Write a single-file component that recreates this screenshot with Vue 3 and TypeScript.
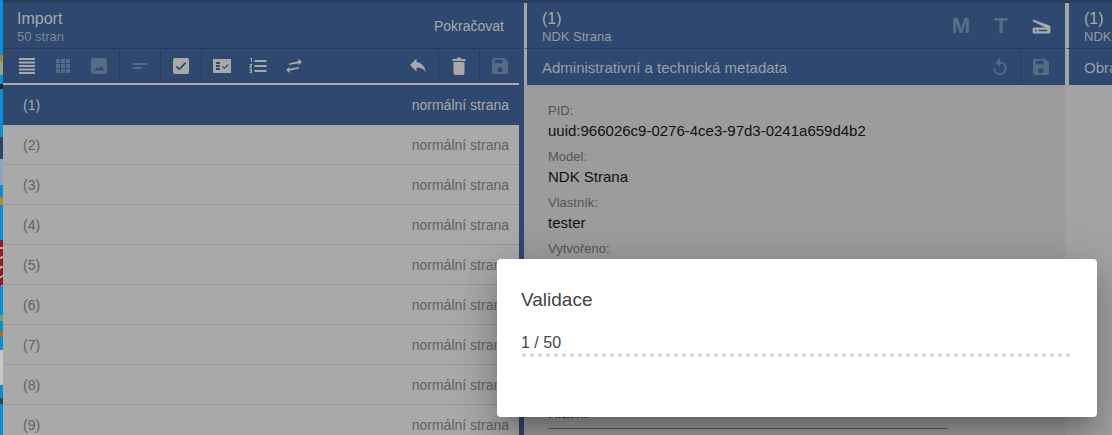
<script setup lang="ts">
const rows = [1, 2, 3, 4, 5, 6, 7, 8, 9];
const fields = [
  { label: 'PID:', value: 'uuid:966026c9-0276-4ce3-97d3-0241a659d4b2' },
  { label: 'Model:', value: 'NDK Strana' },
  { label: 'Vlastník:', value: 'tester' },
  { label: 'Vytvořeno:', value: '' },
];
const dots = Array.from({ length: 69 }, (_, i) => i);
// scraps of the wallpaper that shows down the left edge, under the backdrop
const scraps = [
  { top: 55, height: 7, background: '#a8852f' },
  { top: 62, height: 13, background: '#8fa58d' },
  { top: 84, height: 5, background: '#222' },
  { top: 137, height: 22, background: '#2c4466' },
  { top: 159, height: 26, background: '#8ea6c6' },
  { top: 197, height: 8, background: '#b8862c' },
  { top: 240, height: 46, background: 'repeating-linear-gradient(160deg, #8e1c24 0 7px, #b9a9a9 7px 9px)' },
  { top: 315, height: 6, background: '#7d9a70' },
  { top: 331, height: 5, background: '#b5661d' },
  { top: 350, height: 35, background: '#c4cacb' },
  { top: 398, height: 6, background: '#3d3f44' },
];
</script>

<template>
  <div class="page">
    <div class="strip">
      <i v-for="s in scraps" :key="s.top" class="scrap" :style="{ top: s.top + 'px', height: s.height + 'px', background: s.background }"></i>
    </div>
    <div class="main">
      <div class="topbar"></div>
      <div class="columns">
        <section class="panel list-panel">
          <header class="head">
            <div class="titles">
              <div class="title">Import</div>
              <div class="sub">50 stran</div>
            </div>
            <div class="continue">Pokračovat</div>
          </header>
          <div class="tools">
            <svg class="ic" viewBox="0 0 24 24"><path d="M4 4h16v2H4zM4 7.500h16v2H4zM4 11h16v2H4zM4 14.500h16v2H4zM4 18h16v2H4z"/></svg>
            <svg class="ic dim" viewBox="0 0 24 24"><path d="M5 5h4v4H5zM10 5h4v4h-4zM15 5h4v4h-4zM5 10h4v4H5zM10 10h4v4h-4zM15 10h4v4h-4zM5 15h4v4H5zM10 15h4v4h-4zM15 15h4v4h-4z"/></svg>
            <svg class="ic dim" viewBox="-1.500 -1.500 27 27"><path fill-rule="evenodd" d="M5 3h14a2 2 0 0 1 2 2v14a2 2 0 0 1-2 2H5a2 2 0 0 1-2-2V5a2 2 0 0 1 2-2zM6 17h12l-3.500-5-2.500 3-1.500-1.500z"/></svg>
            <i class="sep"></i>
            <svg class="ic dim" viewBox="0 0 24 24"><path d="M5 9h14v2H5zM5 13h9v2H5z"/></svg>
            <i class="sep"></i>
            <svg class="ic" viewBox="-1.500 -1.500 27 27"><path fill-rule="evenodd" d="M5 3h14a2 2 0 0 1 2 2v14a2 2 0 0 1-2 2H5a2 2 0 0 1-2-2V5a2 2 0 0 1 2-2zm5 14l8-8-1.400-1.400-6.600 6.600-2.600-2.600L6 13z"/></svg>
            <i class="sep"></i>
            <svg class="ic" viewBox="0 0 24 24"><path fill-rule="evenodd" d="M3 5h18v14H3zM6 8v2h4V8zM6 11v2h4v-2zM6 14v2h4v-2zM12 13l1-1 1.500 1.500L17.500 10l1 1-4 4z"/></svg>
            <svg class="ic" viewBox="0 0 24 24"><path d="M8.500 6h12v2h-12zM8.500 11h12v2h-12zM8.500 16h12v2h-12zM4 4h2v4H5V5H4zM3.500 10H6v2l-1.300 1H6v1H3.500v-1.500L5 11H3.500zM3.500 15H6v4H3.500v-1H5v-.500H4v-1h1V16H3.500z"/></svg>
            <svg class="ic" viewBox="0 0 24 24"><path d="M20 8L16.500 5v2.300L7 9.500v1.500l9.500-1.700V11zM4 16l3.500 3v-2.300l9.500-2.200V13l-9.500 1.700V13z"/></svg>
            <span class="spring"></span>
            <svg class="ic" viewBox="0 0 24 24"><path d="M10.500 8V4.500L4 11l6.500 6.500V13.500c4.500 0 7.500 1.500 9.500 5-.8-5-3.500-9.500-9.500-10.500z"/></svg>
            <i class="sep"></i>
            <svg class="ic" viewBox="0 0 24 24"><path d="M6.500 8h11v11a2 2 0 0 1-2 2h-7a2 2 0 0 1-2-2zM5.500 5H10V3.500h4V5h4.500v2h-13z"/></svg>
            <i class="sep"></i>
            <svg class="ic dim" viewBox="-1.500 -1.500 27 27"><path fill-rule="evenodd" d="M5 3h12l4 4v12a2 2 0 0 1-2 2H5a2 2 0 0 1-2-2V5a2 2 0 0 1 2-2zm1 2v4h9V5zm6 8a3 3 0 1 0 0 6 3 3 0 0 0 0-6z"/></svg>
          </div>
          <div class="rule"></div>
          <div
            v-for="row in rows"
            :key="row"
            class="row"
            :class="{ active: row === 1 }"
          >
            <span>({{ row }})</span>
            <span>normální strana</span>
          </div>
        </section>

        <section class="panel meta-panel">
          <header class="head edged">
            <div class="titles">
              <div class="title">(1)</div>
              <div class="sub light">NDK Strana</div>
            </div>
            <div class="modes">
              <span class="mode">M</span>
              <span class="mode">T</span>
              <span class="mode">
                <svg class="scan" viewBox="0 0 20 16"><path fill-rule="evenodd" d="M1 .500l17.500 6.500c.6.300 1 .800 1 1.500V14a1.500 1.500 0 0 1-1.500 1.500H2A1.500 1.500 0 0 1 .500 14v-3.500A1.500 1.500 0 0 1 2 9h12L.500 2.500zM3 11.500v1.500h2v-1.500zm4 0v1.500h9v-1.500z"/></svg>
              </span>
            </div>
          </header>
          <div class="tools sub-tools edged">
            <span class="tool-title">Administrativní a technická metadata</span>
            <span class="spring"></span>
            <svg class="ic dim" viewBox="-1.500 -1.500 27 27"><path d="M12 6V2L7 7l5 5V8a5.500 5.500 0 1 1-5.500 5.500H4.500A7.500 7.500 0 1 0 12 6z"/></svg>
            <i class="sep"></i>
            <svg class="ic dim" viewBox="-1.500 -1.500 27 27"><path fill-rule="evenodd" d="M5 3h12l4 4v12a2 2 0 0 1-2 2H5a2 2 0 0 1-2-2V5a2 2 0 0 1 2-2zm1 2v4h9V5zm6 8a3 3 0 1 0 0 6 3 3 0 0 0 0-6z"/></svg>
          </div>
          <div class="form">
            <div v-for="f in fields" :key="f.label" class="field">
              <div class="label">{{ f.label }}</div>
              <div class="value">{{ f.value }}</div>
            </div>
            <div class="spring"></div>
            <div class="cut">
              <div class="cut-text">Hlavní</div>
              <div class="cut-line"></div>
            </div>
          </div>
        </section>

        <section class="panel last-panel">
          <header class="head edged wide">
            <div class="titles">
              <div class="title">(1)</div>
              <div class="sub light">NDK Strana</div>
            </div>
          </header>
          <div class="tools sub-tools edged wide">
            <span class="tool-title">Obrázek</span>
          </div>
        </section>
      </div>
    </div>

    <div class="modal">
      <div class="modal-title">Validace</div>
      <div class="count">1 / 50</div>
      <div class="dots">
        <i v-for="d in dots" :key="d" class="dot"></i>
      </div>
    </div>
  </div>
</template>

<style>
html, body { margin: 0; height: 100%; overflow: hidden; }
</style>

<style scoped>
.page {
  position: relative;
  display: flex;
  width: 1112px;
  height: 435px;
  overflow: hidden;
  background: #2e4870;
  font-family: "Liberation Sans", Arial, sans-serif;
  color: #a9a9a9;
}
.strip {
  position: relative;
  width: 3px;
  background: #0a8fce;
  flex: none;
}
.scrap { position: absolute; left: 0; width: 3px; }
.main { flex: 1; display: flex; flex-direction: column; min-width: 0; }
.topbar { height: 3px; background: #263d60; flex: none; }
.columns { flex: 1; display: flex; min-height: 0; }
.panel { background: #9c9c9c; flex: none; display: flex; flex-direction: column; }
.list-panel { width: 516px; background: #a9a9a9; }
.meta-panel { width: 541px; margin-left: 5px; }
.last-panel { flex: 1; min-width: 0; background: #a3a3a3; overflow: hidden; }
.head {
  height: 45px;
  flex: none;
  display: flex;
  align-items: center;
  justify-content: space-between;
  padding: 0 15px 0 14px;
  background: #2e4870;
  border-bottom: 1px solid #243a5b;
}
.head.edged { border-left: 3px solid #a5a5a5; padding: 0 4px 0 15px; }
.edged.wide { border-left-width: 4px; }
.titles { margin-top: 3px; }
.title { font-size: 16px; line-height: 18px; }
.sub { font-size: 13px; line-height: 15px; color: #7d8794; margin-top: 1px; white-space: nowrap; }
.sub.light { color: #989b9f; }
.continue { font-size: 14px; }
.tools {
  height: 34px;
  flex: none;
  display: flex;
  align-items: center;
  padding: 0 1px 0 6px;
  background: #2e4870;
}
.ic { width: 24px; height: 24px; flex: none; margin: 0 6px; fill: #a9a9a9; }
.ic.dim { opacity: .35; }
.sep { width: 1px; height: 30px; margin: 0 2px 0 2px; background: #243a5b; flex: none; }
.spring { flex: 1; }
.rule { height: 2px; background: #a9a9a9; flex: none; }
.row {
  height: 39px;
  flex: none;
  display: flex;
  align-items: center;
  justify-content: space-between;
  padding: 0 10px 0 20px;
  font-size: 14px;
  color: #616161;
  border-bottom: 1px solid #999;
}
.row.active { background: #2e4870; color: #a9a9a9; border-bottom-color: #2e4870; }
.sub-tools { height: 36px; padding: 0 6px 0 15px; border-left: 3px solid #a5a5a5; }
.tool-title { font-size: 15px; white-space: nowrap; color: #9ba0a8; }
.form {
  flex: 1;
  display: flex;
  flex-direction: column;
  padding: 16px 24px 6px;
  min-height: 0;
}
.field { height: 46px; flex: none; }
.label { font-size: 13px; line-height: 19px; color: #555; }
.value { font-size: 15px; line-height: 22px; color: #111; }
.cut { width: 400px; }
.cut-text { font-size: 14px; color: #111; line-height: 14px; }
.cut-line { height: 1px; background: #555; margin-top: 8px; }
.modes { display: flex; align-items: center; }
.mode {
  width: 40px;
  text-align: center;
  font-size: 22px;
  font-weight: 700;
  color: #5a6d88;
  line-height: 26px;
}
.scan { display: block; width: 19px; height: 15px; margin: 2px auto 0; fill: #a9a9a9; }
.modal {
  position: absolute;
  left: 497px;
  top: 259px;
  width: 600px;
  height: 158px;
  box-sizing: border-box;
  padding: 28px 24px;
  background: #fff;
  border-radius: 4px;
  box-shadow: 0 11px 15px -7px rgba(0,0,0,.2), 0 24px 38px 3px rgba(0,0,0,.14), 0 9px 46px 8px rgba(0,0,0,.12);
  color: #444;
}
.modal-title { font-size: 19px; line-height: 26px; }
.count { font-size: 16px; line-height: 18px; margin-top: 21px; }
.dots { display: flex; gap: 4px; margin-top: 1px; margin-left: 1px; }
.dot { width: 4px; height: 4px; border-radius: 50%; background: #cbd6e6; flex: none; }
</style>
